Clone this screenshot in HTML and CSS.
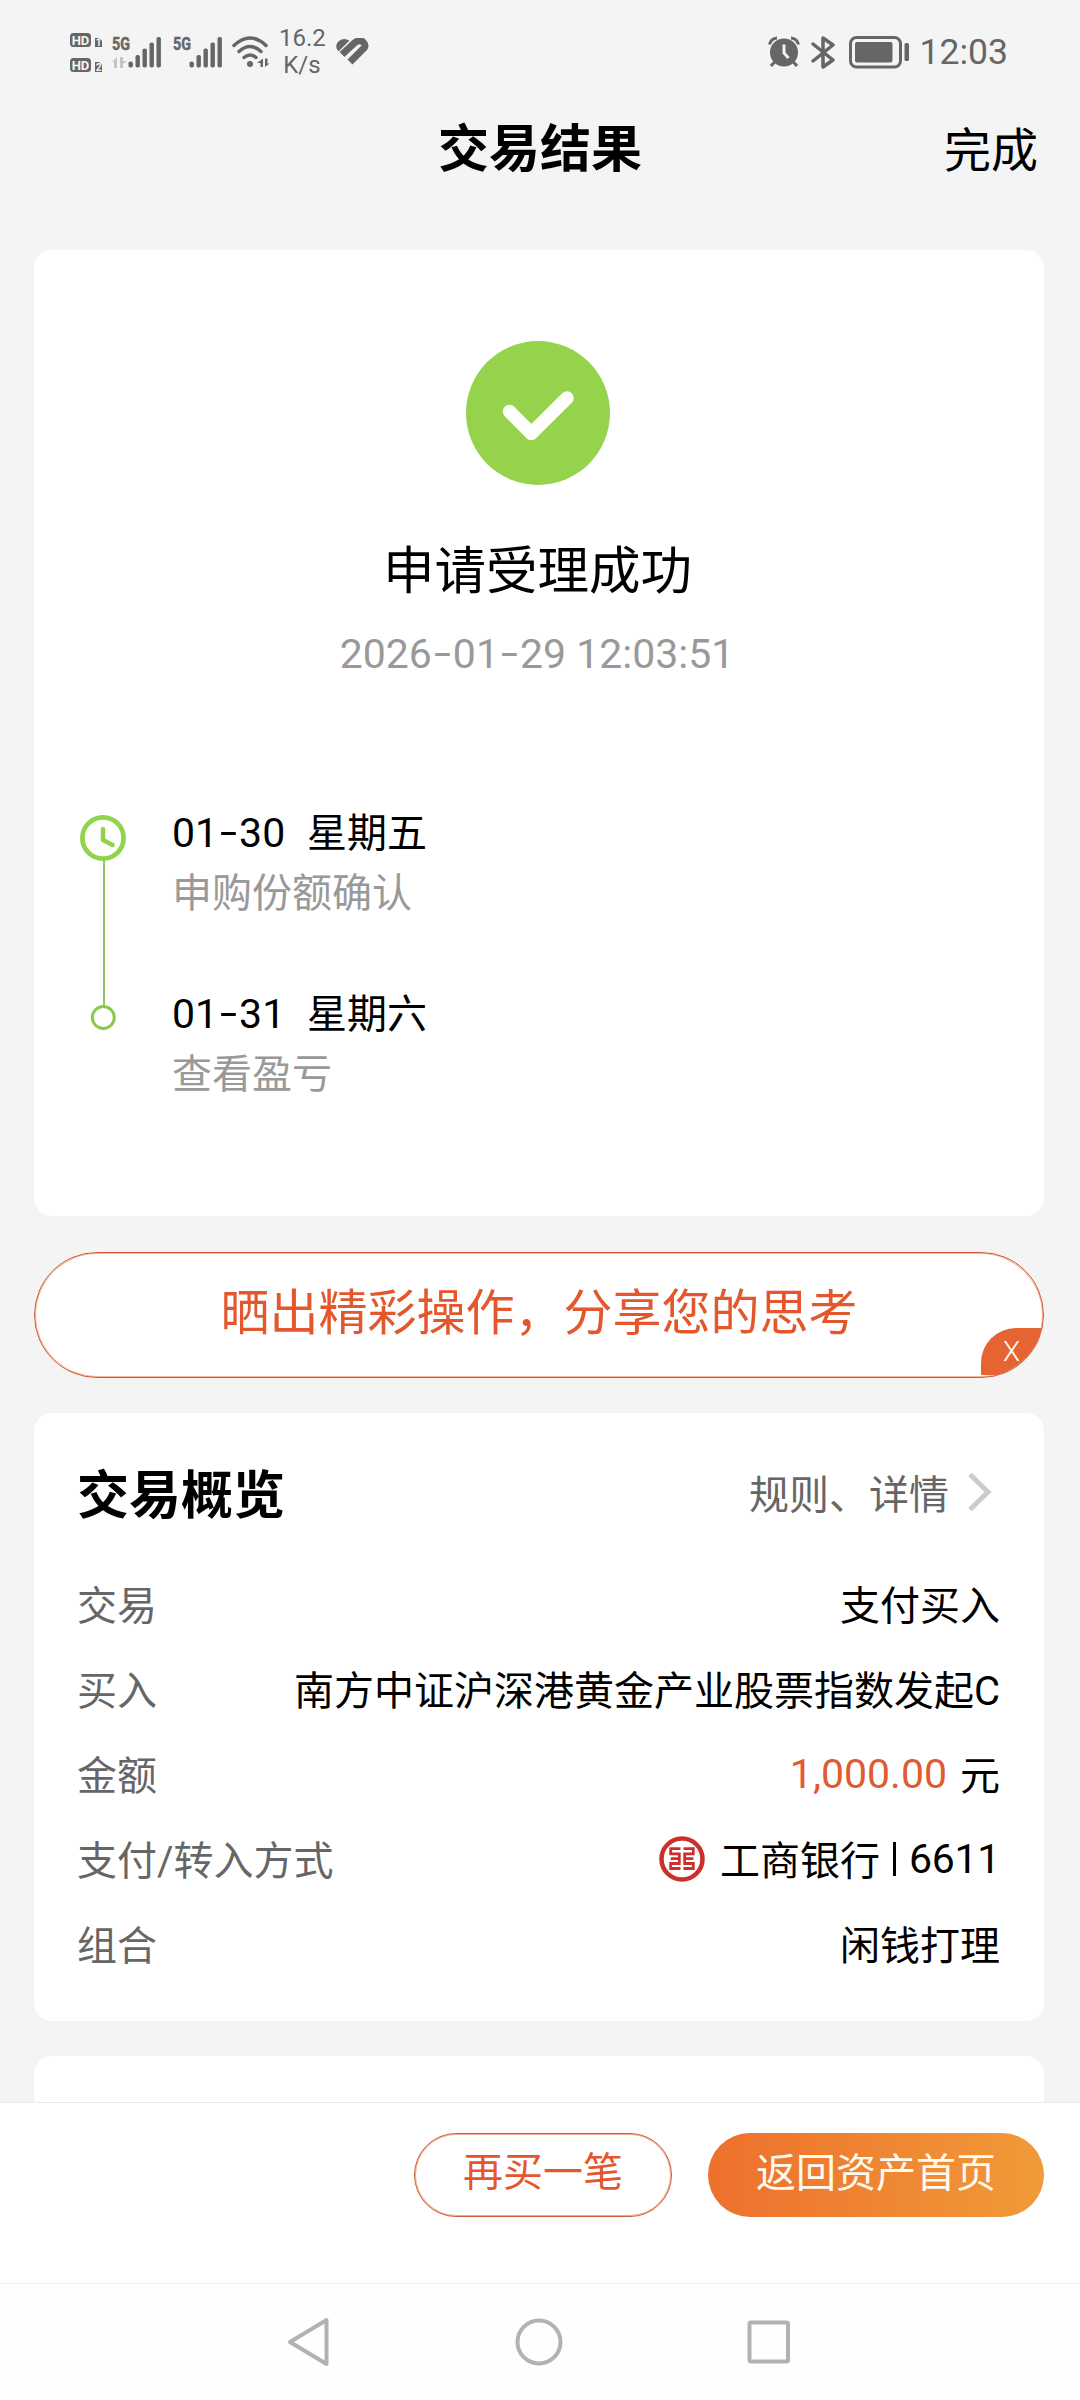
FILE: index.html
```
<!doctype html>
<html lang="zh-CN">
<head>
  <title>交易结果</title>
  <meta charset="utf-8">
  <link rel="stylesheet" href="styles.css">
</head>
<body>
  <div class="statusbar">
    <div class="status-left">
      <svg class="hd" width="34" height="54" viewBox="0 -6 34 54">
        <rect x="0" y="2" width="21" height="14" rx="3.5"/>
        <rect x="0" y="27" width="21" height="14" rx="3.5"/>
        <path d="M25 7h4l3 3v6h-7z"/>
        <path d="M25 31h4l3 3v7h-7z"/>
        <text class="hd-text" x="10.5" y="13.600">HD</text>
        <text class="hd-text" x="10.5" y="38.600">HD</text>
        <text class="sim-text" x="28.5" y="15">1</text>
        <text class="sim-text" x="28.5" y="39.500">2</text>
      </svg>
      <svg class="signal" width="52" height="50" viewBox="0 -8 52 50">
        <text class="net-text" x="0" y="15" textLength="18" lengthAdjust="spacingAndGlyphs">5G</text>
        <path class="faint" d="M5 22v11h-3v-6h-2zM8 22v11h3v-4l4-3h-4v-4z"/>
        <rect x="16.500" y="26.500" width="4.400" height="6" rx="1.8"/>
        <rect x="23.500" y="20" width="4.400" height="12.500" rx="1.8"/>
        <rect x="30.500" y="13.500" width="4.400" height="19" rx="1.8"/>
        <rect x="37.500" y="7.500" width="4.400" height="25" rx="1.8"/>
        <rect x="44.500" y="2" width="4.400" height="30.500" rx="1.8"/>
      </svg>
      <svg class="signal" width="52" height="50" viewBox="0 -8 52 50">
        <text class="net-text" x="0" y="15" textLength="18" lengthAdjust="spacingAndGlyphs">5G</text>
        <rect x="16.500" y="26.500" width="4.400" height="6" rx="1.8"/>
        <rect x="23.500" y="20" width="4.400" height="12.500" rx="1.8"/>
        <rect x="30.500" y="13.500" width="4.400" height="19" rx="1.8"/>
        <rect x="37.500" y="7.500" width="4.400" height="25" rx="1.8"/>
        <rect x="44.500" y="2" width="4.400" height="30.500" rx="1.8"/>
      </svg>
      <svg class="wifi" width="38" height="34" viewBox="0 0 38 34">
        <path class="arc" d="M2 10.500Q18 -4.500 34 10.500M7 16.500Q18 6.500 29 16.500M12 22.500Q18 17.500 24 22.500"/>
        <circle cx="18" cy="29" r="3"/>
        <path d="M31 23.500v8.500h-2.500v-4h-3.500zM33 23.500v8.500l4.500-3.500h-2v-5z"/>
      </svg>
      <div class="speed">16.2<br>K/s</div>
      <svg class="health" width="34" height="28" viewBox="0 0 34 28">
        <path d="M2.500 13.500A7.500 7.500 0 0 1 1.500 4.500Q6.500 -1.500 13.500 2.500z"/>
        <path class="band" d="M6 16.500L18.500 5Q24 0.500 27.500 4.500T26.500 11.500L14 24"/>
      </svg>
    </div>
    <div class="status-right">
      <svg class="alarm" width="32" height="32" viewBox="0 0 32 32">
        <circle cx="16" cy="16.500" r="14"/>
        <path class="ear" d="M1.500 8.500Q3 2.500 9 2M30.500 8.500Q29 2.500 23 2"/>
        <path class="leg" d="M6.500 26l-3.500 4M25.500 26l3.500 4"/>
        <path class="hand" d="M16 8.500v8.500l4.500 5"/>
      </svg>
      <svg class="bluetooth" width="26" height="35" viewBox="0 0 26 35">
        <path d="M2 9l20 16-10 7V3l10 7L2 26"/>
      </svg>
      <svg class="battery" width="61" height="33" viewBox="0 0 61 33">
        <rect class="shell" x="1.500" y="1.500" width="50" height="29.500" rx="6"/>
        <rect x="6" y="6" width="37.500" height="20.500" rx="2"/>
        <rect x="55.500" y="7" width="4.500" height="18" rx="1.500"/>
      </svg>
      <span class="clock">12:03</span>
    </div>
  </div>

  <div class="header">
    <h1>交易结果</h1>
    <a class="done">完成</a>
  </div>

  <div class="content">
    <div class="card result">
      <svg class="success" width="146" height="144" viewBox="0 0 146 144">
        <circle cx="72" cy="72" r="72"/>
        <path d="M43.500 70.500L65.300 92.500L101 57"/>
      </svg>
      <h2>申请受理成功</h2>
      <p class="time">2026<i class="dash">-</i>01<i class="dash">-</i>29 12:03:51</p>
      <div class="timeline">
        <svg class="rail" width="46" height="216" viewBox="0 0 46 216">
          <path class="line" d="M24 45v146"/>
          <circle class="big" cx="23" cy="23" r="20.600"/>
          <path class="hands" d="M23 14v11l9.500 5"/>
          <circle class="small" cx="23.300" cy="202.500" r="11"/>
        </svg>
        <ul>
          <li>
            <p class="day"><span class="num">01<i class="dash">-</i>30</span>星期五</p>
            <p class="desc">申购份额确认</p>
          </li>
          <li>
            <p class="day"><span class="num">01<i class="dash">-</i>31</span>星期六</p>
            <p class="desc">查看盈亏</p>
          </li>
        </ul>
      </div>
    </div>

    <div class="share">
      <span>晒出精彩操作，分享您的思考</span>
      <a class="close">X</a>
    </div>

    <div class="card overview">
      <div class="overview-head">
        <h3>交易概览</h3>
        <a class="more">规则、详情
          <svg width="24" height="38" viewBox="0 0 24 38"><path d="M2 1.500L20 19L2 36.500"/></svg>
        </a>
      </div>
      <dl>
        <div class="row"><dt>交易</dt><dd>支付买入</dd></div>
        <div class="row"><dt>买入</dt><dd>南方中证沪深港黄金产业股票指数发起C</dd></div>
        <div class="row"><dt>金额</dt><dd><span class="num amount">1,000.00</span>元</dd></div>
        <div class="row"><dt>支付/转入方式</dt>
          <dd>
            <svg class="bank" width="46" height="46" viewBox="0 0 46 46">
              <circle cx="23" cy="23" r="20.500"/>
              <path d="M21.500 12.700H11.700V17.800H20.300V27.500H11.700V32.500H21.500M20.300 22.600H11.700M24.500 12.700H34.300V17.800H25.700V27.500H34.300V32.500H24.500M25.700 22.600H34.300"/>
            </svg>
            <span>工商银行</span><i class="bar"></i><span class="num card-no">6611</span>
          </dd>
        </div>
        <div class="row"><dt>组合</dt><dd>闲钱打理</dd></div>
      </dl>
    </div>

    <div class="card next"></div>
  </div>

  <div class="footer">
    <a class="btn btn-line">再买一笔</a>
    <a class="btn btn-fill">返回资产首页</a>
  </div>

  <div class="navbar">
    <svg width="44" height="50" viewBox="0 0 44 50"><path d="M39.500 3L3 25l36.500 22z"/></svg>
    <svg width="48" height="48" viewBox="0 0 48 48"><circle cx="24" cy="24" r="21.500"/></svg>
    <svg width="44" height="44" viewBox="0 0 44 44"><rect x="2.500" y="2.500" width="38.500" height="39" rx="1.500"/></svg>
  </div>
</body>
</html>
```
FILE: styles.css
```
* {
  box-sizing: border-box;
  margin: 0;
  padding: 0;
}
body {
  display: flex;
  flex-direction: column;
  width: 1080px;
  height: 2400px;
  overflow: hidden;
  background: #f4f4f4;
  color: #000;
  font-family: Roboto, "Noto Sans CJK SC", sans-serif;
  font-size: 40px;
}
svg {
  display: block;
  flex: none;
}
ul {
  list-style: none;
}
.num {
  font-size: 41px;
}
.dash {
  display: inline-block;
  width: 21px;
  font-style: normal;
  text-align: center;
  transform: translateY(-1px) scaleX(1.5);
}

/* status bar */
.statusbar {
  display: flex;
  justify-content: space-between;
  height: 104px;
  padding: 0 72px 0 70px;
  color: #666;
  fill: #666;
}
.status-left,
.status-right {
  display: flex;
  align-items: center;
  height: 104px;
}
.hd {
  margin-right: 8px;
}
.hd-text,
.sim-text {
  fill: #f4f4f4;
  font-size: 13px;
  font-weight: bold;
  text-anchor: middle;
}
.sim-text {
  font-size: 10px;
}
.net-text {
  font-size: 19px;
  font-weight: bold;
  stroke: #666;
  stroke-width: 0.5;
}
.signal {
  margin-right: 9px;
}
.faint {
  fill: #c4c4c4;
}
.wifi {
  margin-left: -2px;
}
.arc {
  fill: none;
  stroke: #666;
  stroke-width: 3.5;
  stroke-linecap: round;
}
.speed {
  width: 46px;
  margin-left: 9px;
  font-size: 24px;
  line-height: 27px;
  text-align: center;
}
.health {
  margin-left: 11px;
}
.health .band {
  fill: none;
  stroke: #666;
  stroke-width: 7;
}
.alarm .ear,
.alarm .leg,
.alarm .hand {
  fill: none;
  stroke: #666;
  stroke-width: 3;
}
.alarm .hand {
  stroke: #f4f4f4;
}
.bluetooth {
  margin-left: 11px;
}
.bluetooth path {
  fill: none;
  stroke: #666;
  stroke-width: 3.5;
  stroke-linejoin: round;
  stroke-linecap: round;
}
.battery {
  margin-left: 12px;
}
.battery .shell {
  fill: none;
  stroke: #666;
  stroke-width: 3;
}
.clock {
  margin-left: 10px;
  font-size: 35.5px;
}

/* header */
.header {
  display: grid;
  grid-template-columns: 1fr auto 1fr;
  align-items: center;
  height: 92px;
  padding: 0 42px;
}
.header h1 {
  grid-column: 2;
  font-size: 51px;
  line-height: 92px;
}
.done {
  justify-self: end;
  padding-bottom: 7px;
  font-size: 47px;
}

/* cards */
.content {
  display: flex;
  flex: 1;
  flex-direction: column;
  min-height: 0;
  padding: 54px 36px 0 34px;
  overflow: hidden;
}
.card {
  flex: none;
  border-radius: 18px;
  background: #fff;
}
.result {
  height: 966px;
  padding: 91px 46px 0;
}
.success {
  margin: 0 auto;
  fill: #94d34b;
}
.success path {
  fill: none;
  stroke: #fff;
  stroke-width: 13.5;
  stroke-linecap: round;
  stroke-linejoin: round;
}
.result h2 {
  margin-top: 57px;
  padding-right: 3px;
  font-size: 51.5px;
  font-weight: normal;
  line-height: 60px;
  text-align: center;
}
.time {
  margin-top: 27px;
  padding-right: 4px;
  color: #999;
  font-size: 41px;
  line-height: 50px;
  text-align: center;
}
.timeline {
  display: flex;
  gap: 46px;
  margin-top: 124px;
  line-height: 60px;
}
.rail {
  margin-top: 12px;
  fill: none;
  stroke: #8fd44b;
}
.rail .line {
  stroke: #8cc76a;
  stroke-width: 2;
}
.rail .big {
  stroke-width: 4.7;
}
.rail .hands {
  stroke-width: 4.5;
  stroke-linecap: round;
  stroke-linejoin: round;
}
.rail .small {
  stroke: #86cc47;
  stroke-width: 3;
}
.timeline li {
  margin-bottom: 60px;
}
.day .num {
  display: inline-block;
  width: 135px;
}
.desc {
  color: #999;
}

/* share */
.share {
  position: relative;
  flex: none;
  height: 126px;
  margin: 36px 0 35px;
  overflow: hidden;
  border: 1px solid #cd5c33;
  border-radius: 63px;
  background: #fff;
  box-shadow: inset 0 0 0 1px #f8b598;
  color: #e4572c;
  font-size: 49px;
  line-height: 121px;
  text-align: center;
}
.close {
  position: absolute;
  right: 1px;
  bottom: 2px;
  width: 61px;
  height: 47px;
  border-top-left-radius: 35px;
  background: #e66431;
  color: #fff;
  font-size: 28px;
  font-weight: 300;
  line-height: 47px;
}

/* overview */
.overview {
  height: 608px;
  padding: 31px 44px 0 43px;
}
.overview-head {
  display: flex;
  align-items: center;
  justify-content: space-between;
  height: 94px;
}
.overview h3 {
  font-size: 52px;
}
.more {
  display: flex;
  align-items: center;
  gap: 19px;
  padding: 2px 8px 0 0;
  color: #666;
}
.more path {
  fill: none;
  stroke: #ccc;
  stroke-width: 5;
}
dl {
  padding-top: 22px;
}
.row {
  display: flex;
  align-items: center;
  justify-content: space-between;
  height: 85px;
}
.row dt {
  color: #666;
}
.row dd {
  display: flex;
  align-items: center;
}
.row .num {
  padding-top: 2px;
}
.amount {
  margin-right: 13px;
  color: #df5c33;
}
.bank {
  margin: 3px 15px 0 0;
  fill: none;
  stroke: #cb302d;
  stroke-width: 4.5;
}
.bank path {
  stroke-width: 2.8;
}
.bar {
  width: 3px;
  height: 34px;
  margin: 2px 13px 0 13px;
  background: #000;
}
.card-no {
  letter-spacing: -0.3px;
}
.next {
  height: 100px;
  margin-top: 35px;
}

/* footer */
.footer {
  display: flex;
  flex: none;
  justify-content: flex-end;
  gap: 36px;
  height: 181px;
  padding: 30px 36px 0;
  border-top: 1px solid #ebebeb;
  background: #fff;
}
.btn {
  height: 84px;
  border-radius: 42px;
  line-height: 78px;
  text-align: center;
}
.btn-line {
  width: 258px;
  border: 1px solid #cd5c33;
  box-shadow: inset 0 0 0 1px #f3ab8e;
  color: #e4572c;
}
.btn-fill {
  width: 336px;
  background: linear-gradient(to right, #ed702d, #f19a38);
  color: #fffaf0;
  line-height: 81px;
}

/* system nav */
.navbar {
  display: flex;
  flex: none;
  align-items: center;
  justify-content: space-between;
  height: 117px;
  padding: 0 289px 0 287px;
  border-top: 1px solid #f0f0f0;
  background: #fefefe;
  fill: none;
  stroke: #b2b2b2;
  stroke-width: 4;
  stroke-linejoin: round;
}
```
